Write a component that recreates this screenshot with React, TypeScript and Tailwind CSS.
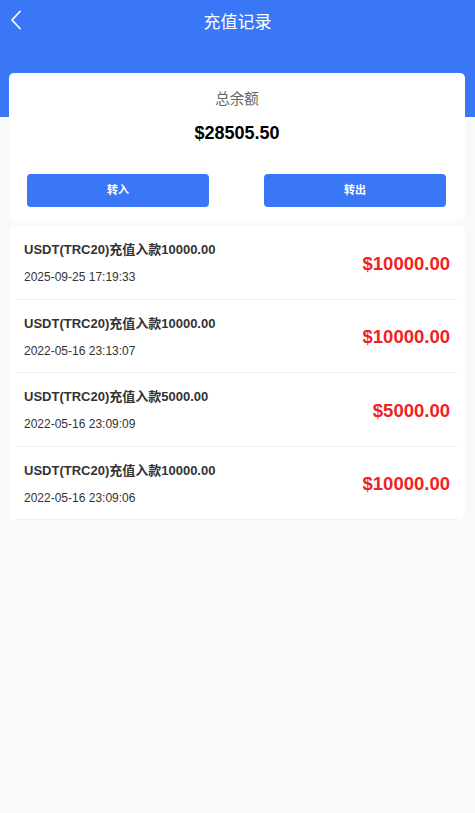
import { useState } from 'react';

type Record = {
  title: string;
  time: string;
  amount: string;
};

const records: Record[] = [
  { title: 'USDT(TRC20)充值入款10000.00', time: '2025-09-25 17:19:33', amount: '$10000.00' },
  { title: 'USDT(TRC20)充值入款10000.00', time: '2022-05-16 23:13:07', amount: '$10000.00' },
  { title: 'USDT(TRC20)充值入款5000.00', time: '2022-05-16 23:09:09', amount: '$5000.00' },
  { title: 'USDT(TRC20)充值入款10000.00', time: '2022-05-16 23:09:06', amount: '$10000.00' },
];

function BackIcon() {
  return (
    <svg width="12" height="20" viewBox="0 0 12 20" fill="none">
      <polyline
        points="10,1.5 2,10 10,18.5"
        stroke="white"
        strokeWidth="1.8"
        strokeLinecap="round"
        strokeLinejoin="round"
      />
    </svg>
  );
}

export default function App() {
  const [balance] = useState('$28505.50');

  return (
    <div
      className="min-h-screen bg-[#f9f9f9] text-[#333]"
      style={{ fontFamily: '"Liberation Sans", Arial, "Noto Sans CJK SC", sans-serif' }}
    >
      {/* Header */}
      <div className="h-[117px] bg-[#3a77f6]">
        <div className="relative flex h-[44px] items-center justify-center pt-[1px]">
          <button className="absolute left-[10px] top-[10px] flex h-[20px] items-center">
            <BackIcon />
          </button>
          <h1 className="text-[17px] leading-[22px] text-white">充值记录</h1>
        </div>
      </div>

      <div className="-mt-[44px] pl-[9px] pr-[10px]">
        {/* Balance card */}
        <div className="flex flex-col items-center rounded-[5px] bg-white pt-[16px] pb-[14px]">
          <span className="text-[14.5px] leading-[20px] text-[#666]">总余额</span>
          <span className="mt-[12px] text-[18px] font-bold leading-[24px] text-black">{balance}</span>
          <div className="mt-[29px] flex w-full justify-between pl-[18px] pr-[19px]">
            <button className="h-[33px] w-[182px] rounded-[4px] bg-[#3a77f6] text-[11px] font-semibold text-white">
              转入
            </button>
            <button className="h-[33px] w-[182px] rounded-[4px] bg-[#3a77f6] text-[11px] font-semibold text-white">
              转出
            </button>
          </div>
        </div>

        {/* Records */}
        <div className="mt-[5px] rounded-[5px] bg-white px-[7px]">
          {records.map((r, i) => (
            <div
              key={i}
              className="flex items-center justify-between border-b border-[#eeeeee] pl-[8px] pr-[8px] pt-[15px] pb-[12.5px]"
            >
              <div className="flex flex-col gap-[9px]">
                <span className="text-[13px] font-bold leading-[18px] text-[#333]">{r.title}</span>
                <span className="text-[12px] leading-[18px] text-[#333]">{r.time}</span>
              </div>
              <span className="text-[18.5px] font-bold text-[#f0221f]">{r.amount}</span>
            </div>
          ))}
        </div>
      </div>
    </div>
  );
}
